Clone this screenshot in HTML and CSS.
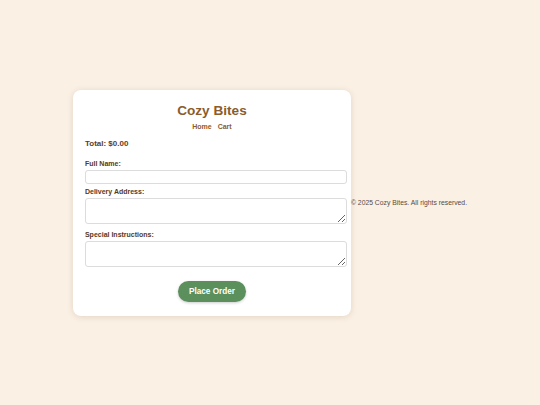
FILE: index.html
```html
<!DOCTYPE html>
<html lang="en">
<head>
<meta charset="utf-8">
<title>Cozy Bites - Checkout</title>
<link rel="stylesheet" href="styles.css">
</head>
<body>
  <main class="card">
    <header class="header">
      <h1 class="title">Cozy Bites</h1>
      <nav class="nav">
        <a href="#" class="nav-link">Home</a>
        <a href="#" class="nav-link">Cart</a>
      </nav>
    </header>
    <p class="total">Total: $0.00</p>
    <form class="form">
      <label class="label" for="name">Full Name:</label>
      <input class="input" id="name" type="text">
      <label class="label" for="address">Delivery Address:</label>
      <textarea class="input area" id="address"></textarea>
      <label class="label" for="notes">Special Instructions:</label>
      <textarea class="input area" id="notes"></textarea>
      <div class="actions">
        <button type="button" class="btn">Place Order</button>
      </div>
    </form>
  </main>
  <footer class="footer">© 2025 Cozy Bites. All rights reserved.</footer>
</body>
</html>
```

FILE: styles.css
```css
html, body {
  margin: 0;
  padding: 0;
}
body {
  background: #faf0e4;
  font-family: "Liberation Sans", Arial, sans-serif;
  min-height: 100vh;
  display: flex;
  justify-content: center;
  align-items: center;
}
.card {
  width: 254px;
  background: #ffffff;
  border-radius: 8px;
  padding: 13px 12px 14px;
  box-shadow: 0 1px 6px rgba(120, 90, 50, 0.18);
}
.header {
  text-align: center;
}
.title {
  margin: 0;
  font-size: 13.6px;
  line-height: 16px;
  color: #8a5c2e;
  font-weight: bold;
}
.nav {
  margin-top: 4px;
  display: flex;
  justify-content: center;
  gap: 6px;
}
.nav-link {
  font-size: 7px;
  line-height: 8px;
  font-weight: bold;
  color: #8a5c2e;
  text-decoration: none;
}
.total {
  margin: 8px 0 0;
  font-size: 8px;
  line-height: 9px;
  font-weight: bold;
  color: #5a3d28;
}
.form {
  margin-top: 12px;
}
.label {
  display: block;
  font-size: 7px;
  line-height: 8px;
  font-weight: bold;
  color: #553a26;
  margin-top: 4px;
  margin-bottom: 2px;
}
.label:first-child {
  margin-top: 0;
}
.input {
  display: block;
  width: 100%;
  height: 6px;
  padding: 3px;
  margin: 0;
  border: 1px solid #dcdcdc;
  border-radius: 3px;
  background: #fff;
  font-family: inherit;
  font-size: 7px;
}
.area {
  height: 18px;
  margin-bottom: 7px;
  resize: vertical;
}
.actions {
  display: flex;
  justify-content: center;
  margin-top: 14px;
}
.btn {
  width: 68px;
  height: 21px;
  padding: 0;
  border: none;
  border-radius: 11px;
  background: #5b8f5c;
  color: #ffffff;
  font-family: inherit;
  font-size: 8.2px;
  font-weight: bold;
  box-shadow: 0 1px 3px rgba(0, 0, 0, 0.2);
}
.footer {
  font-size: 6.8px;
  color: #5a4a3c;
  white-space: nowrap;
}
```
